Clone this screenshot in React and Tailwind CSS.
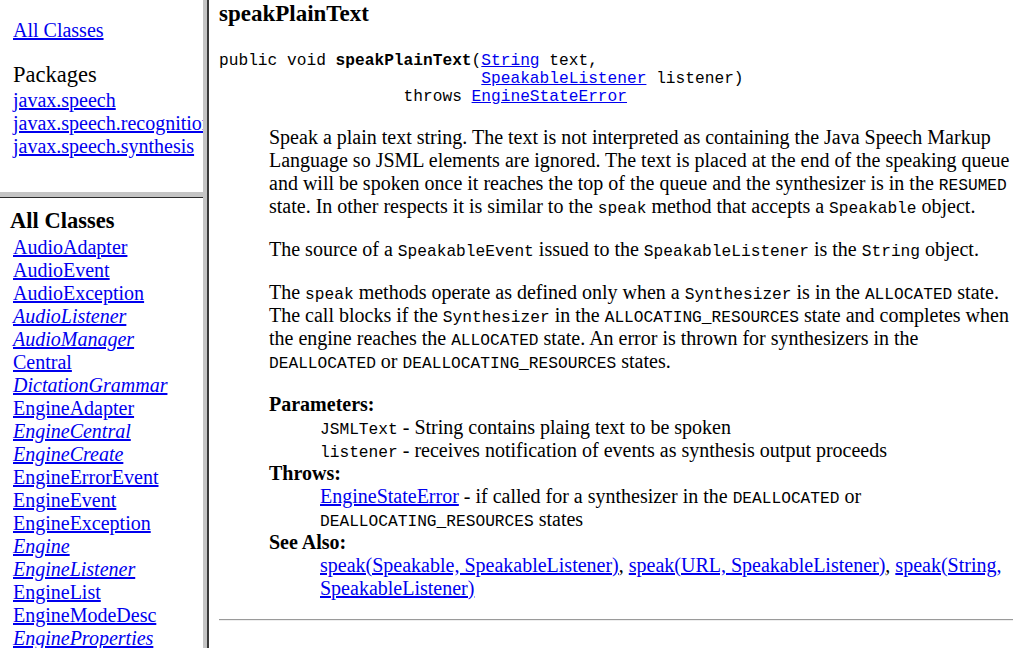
import React from "react";

const serif = { fontFamily: '"Liberation Serif", "Times New Roman", serif' };
const mono = "font-['Liberation_Mono',monospace] text-[16.2px]";

function A({ children, i }) {
  return (
    <a href="#" className={"text-[#0000ee] underline " + (i ? "italic" : "")}>
      {children}
    </a>
  );
}

function C({ children }) {
  return <code className={mono + " leading-[14px]"}>{children}</code>;
}

const classes = [
  ["AudioAdapter", false],
  ["AudioEvent", false],
  ["AudioException", false],
  ["AudioListener", true],
  ["AudioManager", true],
  ["Central", false],
  ["DictationGrammar", true],
  ["EngineAdapter", false],
  ["EngineCentral", true],
  ["EngineCreate", true],
  ["EngineErrorEvent", false],
  ["EngineEvent", false],
  ["EngineException", false],
  ["Engine", true],
  ["EngineListener", true],
  ["EngineList", false],
  ["EngineModeDesc", false],
  ["EngineProperties", true],
  ["EngineStateError", false],
  ["FinalDictationResult", true],
];

export default function App() {
  return (
    <div
      className="flex h-[648px] w-[1024px] overflow-hidden bg-white text-black text-[20px] leading-[23px]"
      style={serif}
    >
      {/* Left column */}
      <div className="flex w-[203px] shrink-0 flex-col">
        <div className="h-[192px] shrink-0 overflow-hidden whitespace-nowrap pl-[13px] pt-[19px]">
          <div>
            <A>All Classes</A>
          </div>
          <div className="mt-[20px] text-[22.5px] leading-[26px]">Packages</div>
          <div className="mt-[1px]">
            <A>javax.speech</A>
          </div>
          <div>
            <A>javax.speech.recognition</A>
          </div>
          <div>
            <A>javax.speech.synthesis</A>
          </div>
        </div>
        <div className="h-[5px] shrink-0 bg-[#c4c4c4]" />
        <div className="h-[1px] shrink-0 bg-[#2a2a2a]" />
        <div className="flex-1 overflow-hidden whitespace-nowrap pl-[10px] pt-[10px]">
          <div className="text-[22.5px] font-bold leading-[26px]">All Classes</div>
          <div className="mt-[2px] pl-[3px]">
            {classes.map(([n, i]) => (
              <div key={n}>
                <A i={i}>{n}</A>
              </div>
            ))}
          </div>
        </div>
      </div>

      {/* Vertical frame border */}
      <div className="flex w-[6px] shrink-0">
        <div className="w-[4px] bg-[#c4c4c4]" />
        <div className="w-[2px] bg-[#3a3a3a]" />
      </div>

      {/* Main frame */}
      <div className="flex-1 overflow-hidden pl-[10px] pr-[11px] pt-[1px]">
        <h3 className="text-[23px] font-bold leading-[26px]">speakPlainText</h3>
        <pre className={mono + " mt-[25px] leading-[18px]"}>
          {"public void "}
          <b>speakPlainText</b>
          {"("}
          <A>String</A>
          {" text,\n                           "}
          <A>SpeakableListener</A>
          {" listener)\n                   throws "}
          <A>EngineStateError</A>
        </pre>
        <div className="ml-[50px] whitespace-nowrap">
          <p className="mt-[20px]">
            Speak a plain text string. The text is not interpreted as containing the Java Speech Markup
            <br />
            Language so JSML elements are ignored. The text is placed at the end of the speaking queue
            <br />
            and will be spoken once it reaches the top of the queue and the synthesizer is in the{" "}
            <C>RESUMED</C>
            <br />
            state. In other respects it is similar to the <C>speak</C> method that accepts a{" "}
            <C>Speakable</C> object.
          </p>
          <p className="mt-[20px]">
            The source of a <C>SpeakableEvent</C> issued to the <C>SpeakableListener</C> is the{" "}
            <C>String</C> object.
          </p>
          <p className="mt-[20px]">
            The <C>speak</C> methods operate as defined only when a <C>Synthesizer</C> is in the{" "}
            <C>ALLOCATED</C> state.
            <br />
            The call blocks if the <C>Synthesizer</C> in the <C>ALLOCATING_RESOURCES</C> state and
            completes when
            <br />
            the engine reaches the <C>ALLOCATED</C> state. An error is thrown for synthesizers in the
            <br />
            <C>DEALLOCATED</C> or <C>DEALLOCATING_RESOURCES</C> states.
          </p>
          <dl className="mt-[20px]">
            <dt className="font-bold">Parameters:</dt>
            <dd className="ml-[51px]">
              <C>JSMLText</C> - String contains plaing text to be spoken
            </dd>
            <dd className="ml-[51px]">
              <C>listener</C> - receives notification of events as synthesis output proceeds
            </dd>
            <dt className="font-bold">Throws:</dt>
            <dd className="ml-[51px]">
              <A>EngineStateError</A> - if called for a synthesizer in the <C>DEALLOCATED</C> or
              <br />
              <C>DEALLOCATING_RESOURCES</C> states
            </dd>
            <dt className="font-bold">See Also:</dt>
            <dd className="ml-[51px]">
              <A>speak(Speakable, SpeakableListener)</A>, <A>speak(URL, SpeakableListener)</A>,{" "}
              <A>
                speak(String,
                <br />
                SpeakableListener)
              </A>
            </dd>
          </dl>
        </div>
        <div className="mt-[19px] h-[2px] border-t border-[#9a9a9a] border-b border-b-[#eeeeee]" />
      </div>
    </div>
  );
}
